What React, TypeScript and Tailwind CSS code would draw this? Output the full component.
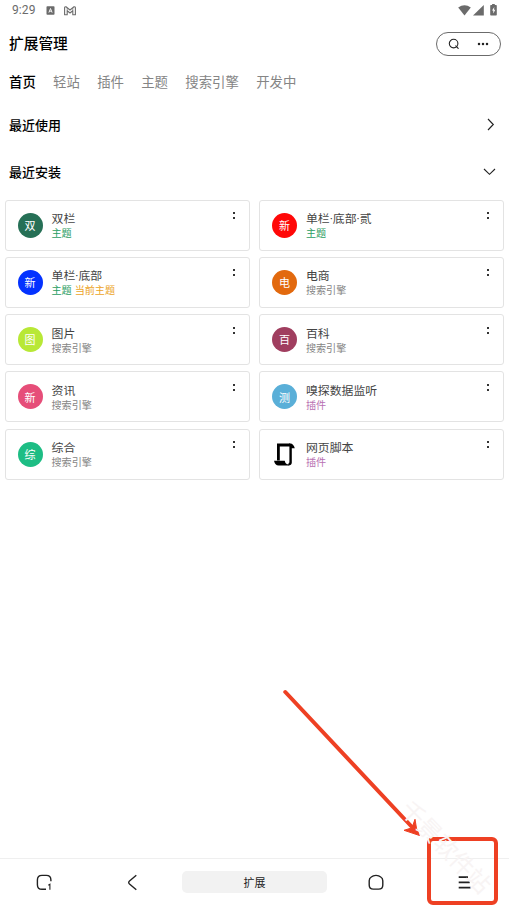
import type { ReactNode } from "react";

type Tag = {
  label: string;
  tone: string;
};

type Extension = {
  name: string;
  badge?: string;
  color?: string;
  tags: Tag[];
};

const theme: Tag = { label: "主题", tone: "text-[#2a9d62]" };
const current: Tag = { label: "当前主题", tone: "text-[#eca41f]" };
const search: Tag = { label: "搜索引擎", tone: "text-[#858585]" };
const plugin: Tag = { label: "插件", tone: "text-[#b870b2]" };

const extensions: Extension[] = [
  { name: "双栏", badge: "双", color: "bg-[#267056]", tags: [theme] },
  { name: "单栏·底部·贰", badge: "新", color: "bg-[#ff0808]", tags: [theme] },
  { name: "单栏·底部", badge: "新", color: "bg-[#0432ff]", tags: [theme, current] },
  { name: "电商", badge: "电", color: "bg-[#e2690e]", tags: [search] },
  { name: "图片", badge: "图", color: "bg-[#b8e836]", tags: [search] },
  { name: "百科", badge: "百", color: "bg-[#a03e5f]", tags: [search] },
  { name: "资讯", badge: "新", color: "bg-[#e64e79]", tags: [search] },
  { name: "嗅探数据监听", badge: "测", color: "bg-[#5aafd8]", tags: [plugin] },
  { name: "综合", badge: "综", color: "bg-[#1dbd84]", tags: [search] },
  { name: "网页脚本", tags: [plugin] }
];

const tabs = ["首页", "轻站", "插件", "主题", "搜索引擎", "开发中"];

function StatusBar() {
  return (
    <div className="flex h-[21px] shrink-0 items-center justify-between pl-3 pr-[12px] text-[#6b6b6b]">
      <div className="flex items-center">
        <span className="w-[34px] font-[Roboto] text-[12px] leading-[21px] tracking-[0.1px]">9:29</span>
        <svg className="h-[9px] w-[9px]" viewBox="0 0 9 9">
          <rect x="0.5" y="0.3" width="8" height="8.4" rx="0.8" fill="currentColor" />
          <path d="M2.9 6.6 4.5 2.5l1.6 4.1M3.4 5.2h2.2" fill="none" stroke="#fff" strokeWidth="0.9" />
        </svg>
        <svg className="ml-[9px] h-[10px] w-[12px]" viewBox="0 0 12 10" fill="none" stroke="currentColor" strokeWidth="1.1">
          <path d="M.6 1.8Q.6.6 2 .8L6 4 10 .8Q11.4.6 11.4 1.8V8.8H8.8V4.8L6 7 3.2 4.8V8.8H.6Z" strokeLinejoin="round" />
          <path d="M3.2 4.8V2M8.8 4.8V2" strokeWidth="0.7" />
        </svg>
      </div>
      <div className="mb-px flex items-center">
        <svg className="h-[11px] w-[13px]" viewBox="0 0 13 11" fill="currentColor">
          <path d="M.2 2.5Q6.5-1.9 12.8 2.5L6.5 10.6Z" />
        </svg>
        <svg className="ml-[2px] h-[11px] w-[11px]" viewBox="0 0 11 11" fill="currentColor">
          <path d="M0 10.5 10.8 0V10.5Z" />
        </svg>
        <svg className="ml-[6px] h-[12px] w-[7px]" viewBox="0 0 7 12">
          <path d="M2.1 0h2.7v1.1h1.3q.7 0 .7.7v9q0 .7-.7.7H.9q-.7 0-.7-.7v-9q0-.7.7-.7h1.2Z" fill="currentColor" />
          <path d="M4.3 2.9 2 6.6h1.3v2.8L5.3 5.8H4Z" fill="#fff" />
        </svg>
      </div>
    </div>
  );
}

function Header() {
  return (
    <header className="flex h-[45px] shrink-0 items-center justify-between pl-[9px] pr-[8.5px]">
      <h1 className="text-[14.7px] font-medium text-black">扩展管理</h1>
      <div className="flex h-[24px] w-[65px] items-center justify-between rounded-full border border-[#6b6b6b] pl-[11px] pr-[11px]">
        <svg className="h-[12px] w-[12px]" viewBox="0 0 12 12" fill="none" stroke="#222" strokeWidth="1.1">
          <circle cx="5.6" cy="5.6" r="4.3" />
          <path d="m7.8 7.8 2.4 2.6" strokeLinecap="round" />
        </svg>
        <svg className="h-[4px] w-[12px]" viewBox="0 0 12 4" fill="#222">
          <circle cx="2" cy="2" r="1.25" />
          <circle cx="6" cy="2" r="1.25" />
          <circle cx="10" cy="2" r="1.25" />
        </svg>
      </div>
    </header>
  );
}

function SectionTitle({ children, icon }: { children: ReactNode; icon: string }) {
  return (
    <div className="flex h-[47px] shrink-0 items-center justify-between pl-[9px] pr-[13px]">
      <h2 className="text-[13px] font-medium text-black">{children}</h2>
      <svg className="h-[13px] w-[13px]" viewBox="0 0 13 13" fill="none" stroke="#222" strokeWidth="1.15">
        <path d={icon} />
      </svg>
    </div>
  );
}

function ScriptIcon() {
  return (
    <svg className="h-[25px] w-[25px] shrink-0" viewBox="0 0 25 25">
      <path d="M6.4 18.6V3H18" fill="none" stroke="#000" strokeWidth="2.8" />
      <path d="M17 1.6h2q2.4.5 3.8 4.6H18.4V5Z" />
      <path d="M18.6 4V20.5Q18.4 22.2 16.6 22.2" fill="none" stroke="#000" strokeWidth="2.4" />
      <path d="M2 18.8h10.7q.5 3 2.3 3.4h2v1.4H6.6Q3 23.4 2 18.8Z" />
    </svg>
  );
}

function ExtensionCard({ item }: { item: Extension }) {
  return (
    <article className="flex h-[51px] items-center rounded-[3px] border-[1.5px] border-[#e3e3e3] pl-[11.5px] pr-[14.3px]">
      {item.badge ? (
        <span className={`flex h-[25px] w-[25px] shrink-0 items-center justify-center rounded-full text-[11px] text-white ${item.color}`}>
          {item.badge}
        </span>
      ) : (
        <ScriptIcon />
      )}
      <div className="ml-[9px] min-w-0 flex-1">
        <h3 className="pt-[2px] font-[Roboto,'Noto_Sans_CJK_SC',sans-serif] text-[11.9px] leading-[14px] text-[#444]">{item.name}</h3>
        <p className="flex gap-[3px] text-[10.1px] leading-[14px]">
          {item.tags.map((tag) => (
            <span className={tag.tone} key={tag.label}>{tag.label}</span>
          ))}
        </p>
      </div>
      <div className="mb-[19px] flex flex-col gap-[3px]">
        <i className="h-[2px] w-[2px] bg-[#333]" />
        <i className="h-[2px] w-[2px] bg-[#333]" />
      </div>
    </article>
  );
}

function BottomBar() {
  return (
    <nav className="flex h-[48px] shrink-0 items-center border-t border-[#efefef] pb-px pl-[36px]">
      <svg className="h-[17px] w-[17px]" viewBox="0 0 17 17" fill="none" stroke="#222" strokeWidth="1.4">
        <path d="M10 15.3H6Q1.4 15.3 1.4 10.7V6Q1.4 1.4 6 1.4h4.3Q14.9 1.4 14.9 6v1.2" />
        <path d="m12.3 11.2 1.6-1v5.5" strokeWidth="1.1" />
      </svg>
      <svg className="ml-[74px] h-[17px] w-[11px]" viewBox="0 0 11 17" fill="none" stroke="#222" strokeWidth="1.4">
        <path d="M9.3 1.3 2.5 7q-1.6 1.5 0 3l6.8 5.7" />
      </svg>
      <div className="ml-[44px] flex h-[22px] w-[145px] items-center justify-center rounded-[5px] bg-[#f2f2f2] text-[11px] text-[#222]">
        扩展
      </div>
      <svg className="ml-[40px] h-[17px] w-[17px]" viewBox="0 0 17 17" fill="none" stroke="#222" strokeWidth="1.4">
        <path d="M6.3 1.9Q9 .9 11.7 1.9l2 1.1q2.1 1.3 2.1 3.7v4.2q0 4.2-4.2 4.2H6.4q-4.2 0-4.2-4.2V6.7q0-2.4 2.1-3.7Z" />
      </svg>
      <svg className="ml-[74px] h-[13px] w-[13px]" viewBox="0 0 13 13" fill="none" stroke="#222" strokeWidth="1.8">
        <path d="M.7 1.2H10M.7 6.3h11M.7 11.7h11.8" />
      </svg>
    </nav>
  );
}

// arrow and frame pointing at the menu button
function Callout() {
  return (
    <>
      <svg className="absolute left-[280px] top-[685px] h-[155px] w-[145px]" viewBox="280 685 145 155" fill="#ee4023">
        <path d="M285.3 692 411.5 826.5" stroke="#ee4023" strokeWidth="4" strokeLinecap="round" />
        <path d="M419.5 835.5 404 830.3l8-2.5 3-8.5 1.5 9Z" stroke="#ee4023" />
      </svg>
      <div className="absolute left-[427px] top-[837px] h-[68px] w-[71px] rounded-[6px] border-4 border-[#ee4023]" />
      <div className="absolute left-[387px] top-[831px] w-[120px] rotate-[46deg] text-center text-[23.5px] leading-[30px] text-[#f8f4f4]">
        千景软件站
      </div>
    </>
  );
}

export default function App() {
  return (
    <div className="relative flex h-[906px] w-[509px] flex-col overflow-hidden bg-white font-['Noto_Sans_CJK_SC',sans-serif]">
      <StatusBar />
      <Header />
      <div className="mb-[5px] flex h-[30px] shrink-0 items-center gap-[17.3px] pl-[9px] text-[13.4px]">
        {tabs.map((tab, index) => (
          <span className={index === 0 ? "font-medium text-black" : "text-[#858585]"} key={tab}>{tab}</span>
        ))}
      </div>
      <SectionTitle icon="m5 1 5.3 5.5L5 12">最近使用</SectionTitle>
      <SectionTitle icon="m1 4 5.5 5.3L12 4">最近安装</SectionTitle>
      <main className="grid flex-1 auto-rows-[51px] grid-cols-[245px_245px] gap-x-[9.4px] gap-y-[6.25px] pl-[5px] pt-[4.5px]">
        {extensions.map((item) => (
          <ExtensionCard item={item} key={item.name} />
        ))}
      </main>
      <BottomBar />
      <Callout />
    </div>
  );
}
